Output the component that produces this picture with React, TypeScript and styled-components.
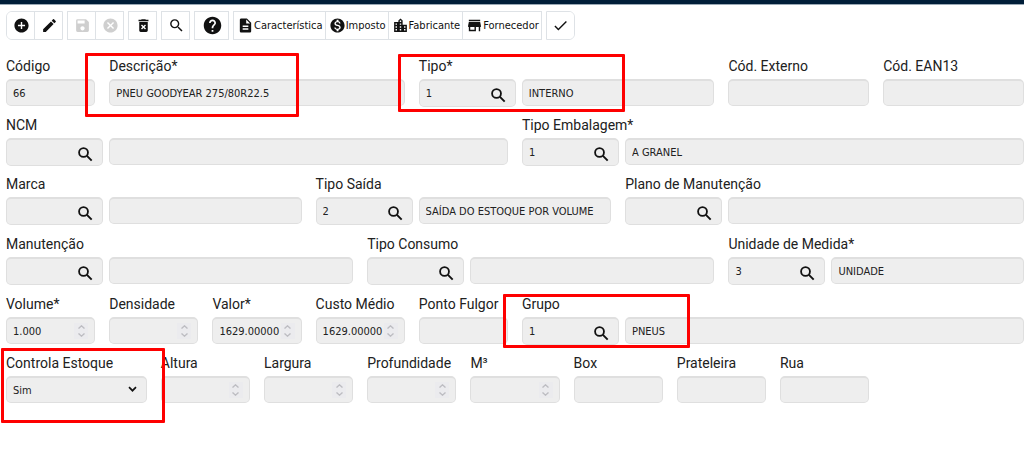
import React, { useId } from "react";
import styled, { createGlobalStyle, css } from "styled-components";
import {
  MdAddCircle,
  MdCancel,
  MdCheck,
  MdDeleteForever,
  MdDescription,
  MdEdit,
  MdHelp,
  MdLocationCity,
  MdMonetizationOn,
  MdSave,
  MdSearch,
} from "react-icons/md";

const GlobalStyle = createGlobalStyle`
  *, *::before, *::after { box-sizing: border-box; }
  body {
    margin: 0;
    background: #fff;
    color: #212121;
    font-family: Roboto, "Liberation Sans", sans-serif;
  }
`;

const compactFont = css`
  font-family: "DejaVu Sans Condensed", "Noto Sans", sans-serif;
  font-size: 11px;
`;

const TopBar = styled.header`
  height: 5px;
  background: #001e38;
  border-bottom: 1px solid #9aa9b5;
`;

const Toolbar = styled.nav`
  display: flex;
  flex-wrap: wrap;
  gap: 4px;
  padding: 6px 6px 0;
`;

const ButtonGroup = styled.div<{ $round?: "left" | "right" }>`
  display: flex;
  height: 29px;
  border: 1px solid #dee2e6;
  overflow: hidden;
  border-radius: ${({ $round }) =>
    $round === "left" ? "6px 0 0 6px" : $round === "right" ? "0 6px 6px 0" : "0"};
`;

const ToolButton = styled.button<{ $large?: boolean }>`
  ${compactFont}
  display: flex;
  align-items: center;
  justify-content: center;
  min-width: ${({ $large }) => ($large ? 33 : 27)}px;
  padding: 0 2px 0 3px;
  border: 0;
  background: #fff;
  color: #111;
  white-space: nowrap;

  & + & {
    min-width: 28px;
    border-left: 1px solid #dee2e6;
  }
  &:disabled {
    color: #cfcfcf;
  }
  svg {
    flex: none;
    width: ${({ $large }) => ($large ? 21 : 17)}px;
    height: ${({ $large }) => ($large ? 21 : 17)}px;
  }
`;

const Form = styled.form`
  display: grid;
  grid-template-columns: repeat(20, minmax(0, 1fr));
  grid-template-rows: 59px 59px 60px 60px 59px;
  column-gap: 14px;
  padding: 15px 0 44px 6px;
`;

const Cell = styled.div<{ $span: number }>`
  position: relative;
  grid-column: span ${({ $span }) => $span};
`;

const Label = styled.label`
  display: block;
  font-size: 14px;
  line-height: 22px;
  padding-bottom: 2px;
  white-space: nowrap;
`;

const Controls = styled.div`
  display: flex;
  gap: 6px;
`;

const fieldBox = css`
  height: 27px;
  border: 1px solid #dfdfdf;
  border-top: 2px solid #dfdfdf;
  border-radius: 5px;
  background: #eee;
`;

const fieldText = css`
  ${compactFont}
  color: #212121;
  padding: 0 6px;
`;

const TextInput = styled.input`
  ${fieldBox}
  ${fieldText}
  flex: 1;
  width: 100%;
  min-width: 0;
`;

const Box = styled.div<{ $lookup?: boolean }>`
  ${fieldBox}
  display: flex;
  align-items: center;
  flex: ${({ $lookup }) => ($lookup ? "0 0 97px" : "1")};
  height: ${({ $lookup }) => ($lookup ? 28 : 27)}px;
  min-width: 0;
`;

const BareInput = styled.input`
  ${fieldText}
  flex: 1;
  min-width: 0;
  width: 100%;
  height: 100%;
  border: 0;
  background: transparent;
  padding-right: 0;
  appearance: textfield;

  &::-webkit-inner-spin-button,
  &::-webkit-outer-spin-button {
    appearance: none;
    margin: 0;
  }
`;

const SearchButton = styled.button`
  display: flex;
  padding: 4px 7px 0 0;
  border: 0;
  background: transparent;
  color: #111;
`;

const Spinner = styled.span`
  display: flex;
  flex-direction: column;
  flex: none;
  width: 14px;
  margin-right: 6px;
  background: #ebebee;
`;

const SpinButton = styled.button`
  display: flex;
  justify-content: center;
  align-items: center;
  height: 8px;
  padding: 0;
  border: 0;
  background: transparent;
  color: #bdbdc2;
`;

const SelectBox = styled.div`
  position: relative;
  flex: 1;
`;

const Select = styled.select`
  ${fieldBox}
  ${fieldText}
  appearance: none;
  display: block;
  width: 100%;
`;

const SelectArrow = styled.svg`
  position: absolute;
  top: 10px;
  right: 10px;
  pointer-events: none;
`;

const Highlight = styled.span<{ $left: number; $top: number; $width: number; $height: number }>`
  position: absolute;
  z-index: 1;
  left: ${({ $left }) => $left}px;
  top: ${({ $top }) => $top}px;
  width: ${({ $width }) => $width}px;
  height: ${({ $height }) => $height}px;
  border: 3px solid #fe0000;
  border-radius: 1px;
  pointer-events: none;
`;

type Mark = [left: number, top: number, width: number, height: number];

type FieldDef = {
  label: string;
  span: number;
  kind?: "text" | "number" | "lookup" | "select";
  value?: string;
  text?: string;
  mark?: Mark;
};

const fields: FieldDef[] = [
  { label: "Código", span: 2, value: "66" },
  { label: "Descrição*", span: 6, value: "PNEU GOODYEAR 275/80R22.5", mark: [-24, -2, 214, 64] },
  { label: "Tipo*", span: 6, kind: "lookup", value: "1", text: "INTERNO", mark: [-21, -1, 227, 58] },
  { label: "Cód. Externo", span: 3 },
  { label: "Cód. EAN13", span: 3 },

  { label: "NCM", span: 10, kind: "lookup" },
  { label: "Tipo Embalagem*", span: 10, kind: "lookup", value: "1", text: "A GRANEL" },

  { label: "Marca", span: 6, kind: "lookup" },
  { label: "Tipo Saída", span: 6, kind: "lookup", value: "2", text: "SAÍDA DO ESTOQUE POR VOLUME" },
  { label: "Plano de Manutenção", span: 8, kind: "lookup" },

  { label: "Manutenção", span: 7, kind: "lookup" },
  { label: "Tipo Consumo", span: 7, kind: "lookup" },
  { label: "Unidade de Medida*", span: 6, kind: "lookup", value: "3", text: "UNIDADE" },

  { label: "Volume*", span: 2, kind: "number", value: "1.000" },
  { label: "Densidade", span: 2, kind: "number" },
  { label: "Valor*", span: 2, kind: "number", value: "1629.00000" },
  { label: "Custo Médio", span: 2, kind: "number", value: "1629.00000" },
  { label: "Ponto Fulgor", span: 2 },
  { label: "Grupo", span: 10, kind: "lookup", value: "1", text: "PNEUS", mark: [-19, 1, 187, 54] },

  { label: "Controla Estoque", span: 3, kind: "select", value: "Sim", mark: [-5, -4, 164, 75] },
  { label: "Altura", span: 2, kind: "number" },
  { label: "Largura", span: 2, kind: "number" },
  { label: "Profundidade", span: 2, kind: "number" },
  { label: "M³", span: 2, kind: "number" },
  { label: "Box", span: 2 },
  { label: "Prateleira", span: 2 },
  { label: "Rua", span: 2 },
];

function StoreIcon() {
  return (
    <svg viewBox="0 0 24 24" fill="currentColor">
      <path d="M20 4H4v2h16V4zm1 10v-2l-1-5H4l-1 5v2h1v6h10v-6h4v6h2v-6h1zm-9 4H6v-4h6v4z" />
    </svg>
  );
}

function BoldSearchIcon() {
  return (
    <svg width="19" height="19" viewBox="0 0 24 24" fill="none" stroke="currentColor">
      <circle cx="9.5" cy="9.5" r="5.6" strokeWidth="2.3" />
      <path d="M13.8 13.8l6 6" strokeWidth="2.5" />
    </svg>
  );
}

function Chevron({ up }: { up?: boolean }) {
  return (
    <svg width="7" height="4" viewBox="0 0 7 4" fill="none" stroke="currentColor" strokeWidth="1.3">
      <path d={up ? "M.5 3.6 3.5.8l3 2.8" : "M.5.4l3 2.8 3-2.8"} />
    </svg>
  );
}

function Field({ label, span, kind = "text", value, text, mark }: FieldDef) {
  const id = useId();
  return (
    <Cell $span={span}>
      <Label htmlFor={id}>{label}</Label>
      <Controls>
        {kind === "text" && <TextInput id={id} defaultValue={value} />}
        {kind === "number" && (
          <Box>
            <BareInput id={id} type="number" step="any" defaultValue={value} />
            <Spinner>
              <SpinButton type="button" aria-label={`Aumentar ${label}`}>
                <Chevron up />
              </SpinButton>
              <SpinButton type="button" aria-label={`Diminuir ${label}`}>
                <Chevron />
              </SpinButton>
            </Spinner>
          </Box>
        )}
        {kind === "lookup" && (
          <>
            <Box $lookup>
              <BareInput id={id} defaultValue={value} />
              <SearchButton type="button" aria-label={`Pesquisar ${label}`}>
                <BoldSearchIcon />
              </SearchButton>
            </Box>
            <TextInput aria-label={`${label} descrição`} defaultValue={text} readOnly />
          </>
        )}
        {kind === "select" && (
          <SelectBox>
            <Select id={id} defaultValue={value}>
              <option>Sim</option>
              <option>Não</option>
            </Select>
            <SelectArrow width="9" height="7" viewBox="0 0 9 7" fill="none" stroke="#111" strokeWidth="1.7">
              <path d="M1 1.2l3.5 3.5L8 1.2" />
            </SelectArrow>
          </SelectBox>
        )}
      </Controls>
      {mark && <Highlight $left={mark[0]} $top={mark[1]} $width={mark[2]} $height={mark[3]} />}
    </Cell>
  );
}

export default function App() {
  return (
    <>
      <GlobalStyle />
      <TopBar />
      <main>
        <Toolbar aria-label="Ações">
          <ButtonGroup $round="left">
            <ToolButton aria-label="Adicionar"><MdAddCircle /></ToolButton>
            <ToolButton aria-label="Editar"><MdEdit /></ToolButton>
          </ButtonGroup>
          <ButtonGroup>
            <ToolButton aria-label="Salvar" disabled><MdSave /></ToolButton>
            <ToolButton aria-label="Cancelar" disabled><MdCancel /></ToolButton>
          </ButtonGroup>
          <ButtonGroup>
            <ToolButton aria-label="Excluir"><MdDeleteForever /></ToolButton>
          </ButtonGroup>
          <ButtonGroup>
            <ToolButton aria-label="Pesquisar"><MdSearch /></ToolButton>
          </ButtonGroup>
          <ButtonGroup>
            <ToolButton aria-label="Ajuda" $large><MdHelp /></ToolButton>
          </ButtonGroup>
          <ButtonGroup>
            <ToolButton><MdDescription />Característica</ToolButton>
            <ToolButton><MdMonetizationOn />Imposto</ToolButton>
            <ToolButton><MdLocationCity />Fabricante</ToolButton>
            <ToolButton><StoreIcon />Fornecedor</ToolButton>
          </ButtonGroup>
          <ButtonGroup $round="right">
            <ToolButton aria-label="Confirmar"><MdCheck /></ToolButton>
          </ButtonGroup>
        </Toolbar>
        <Form>
          {fields.map((field) => (
            <Field key={field.label} {...field} />
          ))}
        </Form>
      </main>
    </>
  );
}
